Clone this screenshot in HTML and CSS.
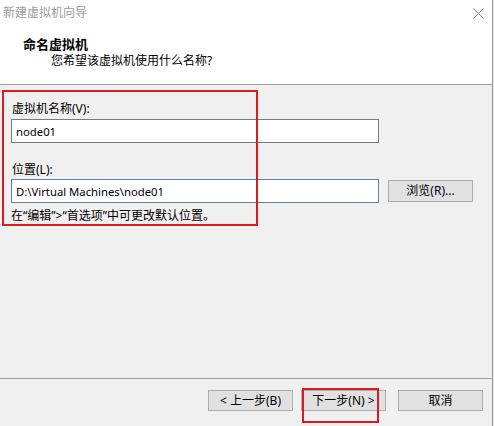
FILE: index.html
```html
<!DOCTYPE html>
<html lang="zh-CN">
<head>
  <meta charset="UTF-8">
  <title>新建虚拟机向导</title>
  <link rel="stylesheet" href="styles.css">
</head>
<body>
  <div class="window">
    <div class="titlebar">
      <span class="title">新建虚拟机向导</span>
      <svg class="close" width="11" height="11" viewBox="0 0 11 11">
        <path d="M0.5 0.5 L10.5 10.5 M10.5 0.5 L0.5 10.5" stroke="#8a8a8a" stroke-width="1" fill="none"/>
      </svg>
    </div>

    <div class="header">
      <div class="heading">命名虚拟机</div>
      <div class="subheading">您希望该虚拟机使用什么名称?</div>
    </div>

    <div class="content">
      <label class="field-label">虚拟机名称(V):</label>
      <input class="text-input" type="text" value="node01">

      <label class="field-label second">位置(L):</label>
      <div class="path-row">
        <input class="text-input path" type="text" value="D:\Virtual Machines\node01">
        <button class="btn browse">浏览(R)...</button>
      </div>

      <p class="hint">在“编辑”>“首选项”中可更改默认位置。</p>
    </div>

    <div class="footer">
      <button class="btn">&lt; 上一步(B)</button>
      <button class="btn next">下一步(N) &gt;</button>
      <button class="btn cancel">取消</button>
    </div>

    <!-- 标注框 -->
    <div class="mark mark-fields"></div>
    <div class="mark mark-next"></div>
  </div>
</body>
</html>
```

FILE: styles.css
```css
html, body {
  margin: 0;
  padding: 0;
}

body {
  width: 494px;
  height: 426px;
  overflow: hidden;
  background: #e6e6e6;
  font-family: "Noto Sans", "Noto Sans CJK SC", sans-serif;
  font-size: 12px;
  color: #000;
}

.window {
  position: relative;
  width: 492px;
  height: 426px;
  border-right: 1px solid #9a9a9a;
  background: #f0f0f0;
  display: flex;
  flex-direction: column;
}

.titlebar {
  height: 30px;
  background: #fff;
  display: flex;
  justify-content: space-between;
  align-items: flex-start;
}

.title {
  color: #9a9a9a;
  line-height: 16px;
  margin: 5px 0 0 3px;
}

.close {
  margin: 8px 8px 0 0;
}

.header {
  height: 54px;
  background: #fff;
  border-bottom: 1px solid #a0a0a0;
}

.heading {
  font-size: 13px;
  font-weight: bold;
  line-height: 18px;
  margin: 5px 0 0 23px;
}

.subheading {
  line-height: 16px;
  margin: 0 0 0 51px;
}

.content {
  flex: 1;
  padding: 16px 0 0 11px;
}

.field-label {
  display: block;
  line-height: 16px;
  margin: 0 0 2px 1px;
}

.field-label.second {
  margin-top: 19px;
  margin-bottom: 1px;
}

.text-input {
  display: block;
  box-sizing: border-box;
  width: 368px;
  height: 24px;
  margin: 0;
  padding: 0 4px;
  border: 1px solid #7a7a7a;
  background: #fff;
  font-family: "Noto Sans", "Noto Sans CJK SC", sans-serif;
  font-size: 11.3px;
  color: #000;
  outline: none;
}

.text-input.path {
  border-color: #5b82ab;
}

.path-row {
  display: flex;
  align-items: flex-start;
}

.btn {
  box-sizing: border-box;
  width: 85px;
  height: 21px;
  padding: 0;
  background: #e1e1e1;
  border: 1px solid #adadad;
  font-family: "Noto Sans", "Noto Sans CJK SC", sans-serif;
  font-size: 12px;
  color: #000;
  line-height: 18px;
}

.browse {
  height: 22px;
  margin: 1px 0 0 9px;
}

.hint {
  line-height: 16px;
  margin: 5px 0 0 0;
}

.footer {
  height: 36px;
  border-top: 1px solid #a0a0a0;
  display: flex;
  justify-content: flex-end;
  align-items: flex-start;
  padding: 11px 9px 0 0;
}

.footer .next {
  margin-left: 8px;
}

.footer .cancel {
  margin-left: 12px;
}

.mark {
  position: absolute;
  border: 2px solid #dc1a20;
  box-sizing: border-box;
}

.mark-fields {
  left: 2px;
  top: 90px;
  width: 256px;
  height: 136px;
}

.mark-next {
  left: 302px;
  top: 388px;
  width: 77px;
  height: 35px;
}
```
